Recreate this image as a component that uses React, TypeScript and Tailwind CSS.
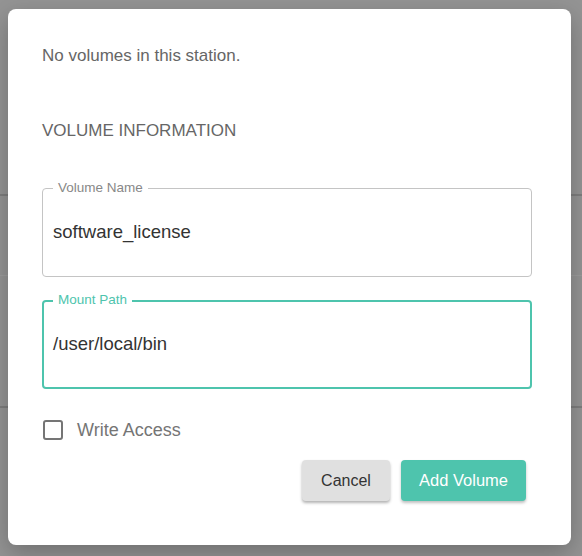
export default function App() {
  return (
    <div
      className="relative h-[556px] w-[582px] overflow-hidden bg-[#949494]"
      style={{ fontFamily: '"Liberation Sans", Arial, sans-serif' }}
    >
      {/* table rows behind the overlay */}
      <div className="absolute left-0 right-0 top-[194px] h-[2px] bg-[#7e7e7e]" />
      <div className="absolute left-0 right-0 top-[275px] h-px bg-[#9c9c9c]" />
      <div className="absolute left-0 right-0 top-[406px] h-[2px] bg-[#7e7e7e]" />

      {/* dialog */}
      <div className="absolute left-[8px] top-[9px] flex h-[536px] w-[563px] flex-col rounded-[8px] bg-white px-[34px] shadow-[0_8px_24px_rgba(0,0,0,0.25)]">
        <p className="mt-[38px] text-[17px] leading-[18px] text-[#666]">No volumes in this station.</p>

        <h3 className="mt-[57px] text-[17px] leading-[18px] text-[#666]">VOLUME INFORMATION</h3>

        {/* Volume Name */}
        <div className="relative mt-[48px] flex h-[89px] w-[490px] items-center rounded-[4px] border border-[#c4c4c4] px-[10px] pb-[2px]">
          <span className="absolute -top-[9px] left-[10px] bg-white px-[5px] text-[13.5px] leading-[16px] text-[#888]">
            Volume Name
          </span>
          <span className="text-[18.5px] text-[#333]">software_license</span>
        </div>

        {/* Mount Path */}
        <div className="relative mt-[23px] flex h-[89px] w-[490px] items-center rounded-[4px] border-2 border-[#4ec4ad] px-[9px] pb-[2px]">
          <span className="absolute -top-[10px] left-[9px] bg-white px-[5px] text-[13.5px] leading-[16px] text-[#4ec4ad]">
            Mount Path
          </span>
          <span className="text-[18.5px] text-[#333]">/user/local/bin</span>
        </div>

        {/* Write Access */}
        <label className="mt-[31px] flex items-center gap-[14px]">
          <span className="ml-px h-[20px] w-[20px] rounded-[3px] border-2 border-[#757575]" />
          <span className="text-[18px] leading-[20px] text-[#757575]">Write Access</span>
        </label>

        {/* actions */}
        <div className="mt-[20px] flex w-[484px] justify-end gap-[11px]">
          <button className="h-[41px] w-[88px] rounded-[4px] bg-[#e0e0e0] text-[16px] text-[#333] shadow-[0_2px_3px_rgba(0,0,0,0.3)]">
            Cancel
          </button>
          <button className="h-[41px] w-[125px] rounded-[4px] bg-[#4ec4ad] text-[16.5px] text-white shadow-[0_2px_3px_rgba(0,0,0,0.25)]">
            Add Volume
          </button>
        </div>
      </div>
    </div>
  )
}
